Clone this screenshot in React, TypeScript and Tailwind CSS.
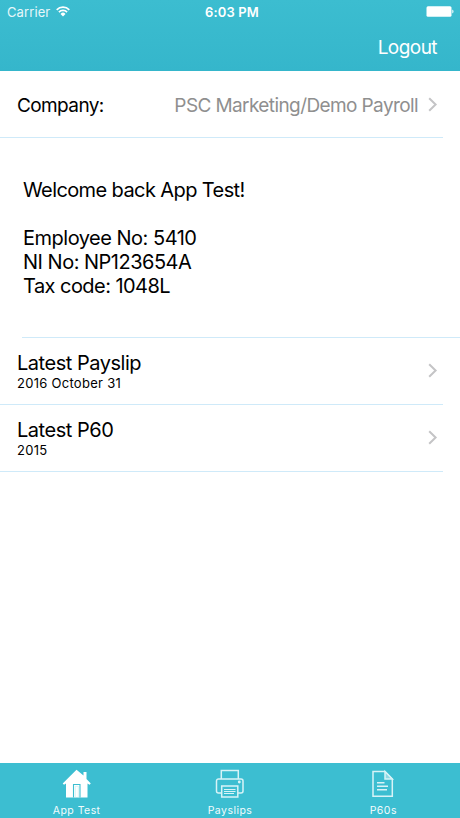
import React from "react";

function Chevron() {
  return (
    <svg width="10" height="15" viewBox="0 0 10 15" fill="none" className="shrink-0">
      <path d="M1.2 1.2 7.6 7.5 1.2 13.8" stroke="#c4c4c6" strokeWidth="2" />
    </svg>
  );
}

function StatusBar() {
  return (
    <div className="grid h-6 grid-cols-3 items-center pl-[7px] pr-[6px] text-[13px] leading-6 text-white">
      <div className="flex items-center gap-[6px]">
        <span className="tracking-[0.1px] text-[#e6f7fa]">Carrier</span>
        <svg width="14" height="12" viewBox="0 0 14 12" fill="none">
          <path d="M0.7 3.8a8.9 8.9 0 0 1 12.6 0M2.9 6.1a5.8 5.8 0 0 1 8.2 0" stroke="#fff" strokeWidth="1.7" />
          <path d="M4.5 7.9a3.5 3.5 0 0 1 5 0L7 10.5z" fill="#fff" />
        </svg>
      </div>
      <span className="pl-[3px] text-center font-semibold tracking-[0.15px]">6:03 PM</span>
      <div className="flex justify-end">
        <svg width="28" height="12" viewBox="0 0 28 12" fill="#fff">
          <rect x="0.5" y="0.3" width="25" height="10.4" rx="1.5" />
          <path d="M26.3 3.6v4c1.6-.5 1.6-3.5 0-4z" />
        </svg>
      </div>
    </div>
  );
}

function Row({ title, detail }: { title: string; detail: string }) {
  return (
    <div className="mr-[17px] flex items-center justify-between border-b border-[#cfeaf9] pl-[17px] pr-[5px]">
      <div className="pt-[13px] pb-[13px]">
        <div className="text-[20px] leading-6 tracking-[-0.47px]">{title}</div>
        <div className="text-[13px] leading-4 tracking-[0.28px]">{detail}</div>
      </div>
      <div className="pb-[2px]">
        <Chevron />
      </div>
    </div>
  );
}

function HomeIcon() {
  return (
    <svg width="30" height="30" viewBox="0 0 30 30">
      <path d="M14.5 0.8 0.7 14.4l1.3 1.4 2-1.2V28.5h21.500V14.600l2 1.200 1.300-1.400-4.300-4.300V3h-3v3.500z" fill="#fff" />
      <path d="M11.500 28.500V15.500h6.500V28.500" fill="none" stroke="#3cbed1" strokeWidth="1.100" />
      <path d="M13.300 28.500V17.300h3V28.500" fill="none" stroke="#b5e6ed" strokeWidth="0.500" />
    </svg>
  );
}

function PrinterIcon() {
  return (
    <svg width="30" height="30" viewBox="0 0 30 30" fill="none" stroke="#d8f3f7" strokeWidth="1.500">
      <path d="M6.300 10V1.500h17V10M7 24H3.500a2 2 0 0 1-2-2V12a2 2 0 0 1 2-2h22.500a2 2 0 0 1 2 2v10a2 2 0 0 1-2 2H23" />
      <path d="M6.700 17h16.100V28H6.700z" />
      <path d="M9 20.500h11.500M9 22.500h11.500M9 24.500h10" strokeWidth="1" />
      <circle cx="24.300" cy="13" r="0.700" />
    </svg>
  );
}

function DocumentIcon() {
  return (
    <svg width="30" height="30" viewBox="0 0 30 30" fill="none" stroke="#d8f3f7" strokeWidth="1.500">
      <path d="M5 2.500h12l7.300 7.500V27.200H5z" />
      <path d="M17 2.500V10h7.300z" fill="#8fd9e4" />
      <path d="M9 13.800h7.500M9 17.300h11M9 20.800h10" />
    </svg>
  );
}

function Tab({ label, children }: { label: string; children: React.ReactNode }) {
  return (
    <div className="flex flex-1 flex-col items-center pt-[6px] text-[10.5px] text-[#f2fcfd]">
      {children}
      <span className="mt-[5px] leading-[14px] tracking-[0.45px]">{label}</span>
    </div>
  );
}

export default function App() {
  return (
    <div className="flex h-[818px] w-[460px] flex-col bg-white font-['Inter',sans-serif] text-black">
      <header className="h-[71px] bg-linear-to-b from-[#3cbdd0] to-[#35b6cb]">
        <StatusBar />
        <div className="flex justify-end pr-[23px] pt-[12px] text-[19px] leading-6 tracking-[-0.55px] text-white">
          <span>Logout</span>
        </div>
      </header>

      <main className="flex-1">
        <div className="mr-[17px] flex h-[67px] items-center border-b border-[#cfeaf9] pl-[17px] pr-[5px] text-[19px] tracking-[-0.6px]">
          <span className="pt-[4px]">Company:</span>
          <span className="ml-auto mr-[10px] pt-[4px] text-[#8f8f8f]">PSC Marketing/Demo Payroll</span>
          <Chevron />
        </div>
        <div className="h-[199px] pl-[23px] pt-[40px] text-[20px] leading-6 tracking-[-0.5px]">
          <p className="tracking-[-0.6px]">Welcome back App Test!</p>
          <p className="mt-6">Employee No: 5410</p>
          <p>NI No: NP123654A</p>
          <p className="tracking-[-0.55px]">Tax code: 1048L</p>
        </div>
        <div className="ml-[22px] h-px bg-[#cfeaf9]" />
        <Row title="Latest Payslip" detail="2016 October 31" />
        <Row title="Latest P60" detail="2015" />
      </main>

      <nav className="flex h-[55px] bg-[#3cbed1]">
        <Tab label="App Test"><HomeIcon /></Tab>
        <Tab label="Payslips"><PrinterIcon /></Tab>
        <Tab label="P60s"><DocumentIcon /></Tab>
      </nav>
    </div>
  );
}
